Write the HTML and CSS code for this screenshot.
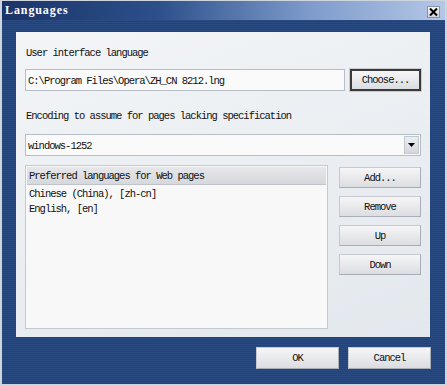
FILE: index.html
```html
<!DOCTYPE html>
<html lang="en">
<head>
  <meta charset="UTF-8" />
  <title>Languages</title>
  <link rel="stylesheet" href="styles.css">
</head>
<body>

  <div class="window">
    <!-- Title bar -->
    <div class="titlebar">
      <span class="title">Languages</span>
      <div class="close">
        <svg width="9" height="8" viewBox="0 0 9 8"><path d="M1 0.5 L8 7.5 M8 0.5 L1 7.5" stroke="#000" stroke-width="2"/></svg>
      </div>
    </div>

    <div class="client">
      <div class="panel">
        <div class="label">User interface language</div>
        <div class="row">
          <div class="field path">C:\Program Files\Opera\ZH_CN 8212.lng</div>
          <button class="btn default">Choose...</button>
        </div>

        <div class="label second">Encoding to assume for pages lacking specification</div>
        <div class="field select">
          <span>windows-1252</span>
          <span class="arrow"><svg width="7" height="4" viewBox="0 0 7 4"><path d="M0 0 H7 L3.5 4 Z" fill="#000"/></svg></span>
        </div>

        <div class="lists">
          <div class="listbox">
            <div class="list-head">Preferred languages for Web pages</div>
            <div class="list-item">Chinese (China), [zh-cn]</div>
            <div class="list-item">English, [en]</div>
          </div>
          <div class="side-buttons">
            <button class="btn">Add...</button>
            <button class="btn">Remove</button>
            <button class="btn">Up</button>
            <button class="btn">Down</button>
          </div>
        </div>
      </div>

      <div class="footer">
        <button class="btn big">OK</button>
        <button class="btn big">Cancel</button>
      </div>
    </div>
  </div>

</body>
</html>
```

FILE: styles.css
```css
* { box-sizing: border-box; margin: 0; padding: 0; }

body {
  font-family: 'Liberation Mono', 'DejaVu Sans Mono', monospace;
  font-size: 10.5px;
  letter-spacing: -1px;
  color: #111;
  background: #fff;
}

.window {
  width: 447px;
  height: 386px;
  border: 2px solid #cfd5de;
  border-top-width: 1px;
  display: flex;
  flex-direction: column;
  background: #26467c;
}

.titlebar {
  height: 19px;
  display: flex;
  align-items: center;
  justify-content: space-between;
  padding: 0 5px 0 3px;
  background: linear-gradient(to right, #1b3468 0%, #2c4f8a 35%, #7f9ccc 70%, #b4c7e6 100%);
}

.title {
  font-family: 'Liberation Serif', serif;
  font-weight: bold;
  font-size: 12px;
  letter-spacing: 0.9px;
  color: #fff;
}

.close {
  width: 13px;
  height: 12px;
  margin-top: 2px;
  background: linear-gradient(#f4f4f4, #cfd3d8);
  border: 1px solid #8a94a4;
  display: flex;
  align-items: center;
  justify-content: center;
}

.client {
  flex: 1;
  padding: 12px 0 0 14px;
  background: repeating-linear-gradient(#2a4b82 0 1px, #23427a 1px 2px);
}

.panel {
  width: 414px;
  height: 305px;
  padding: 14px 9px 8px 9px;
  background: linear-gradient(160deg, #f3f5f7 0%, #e9edf1 60%, #e3e8ee 100%);
  display: flex;
  flex-direction: column;
}

.label {
  line-height: 14px;
  padding-left: 1px;
  margin-bottom: 9px;
}

.label.second {
  margin-top: 18px;
  margin-bottom: 11px;
}

.row {
  display: flex;
  gap: 5px;
}

.field {
  height: 22px;
  background: #fafafa;
  border: 1px solid #b6bdc7;
  display: flex;
  align-items: center;
  padding: 1px 0 0 2px;
}

.path { width: 320px; }

.select {
  justify-content: space-between;
  padding-right: 1px;
}

.arrow {
  width: 15px;
  height: 18px;
  margin-top: -1px;
  background: linear-gradient(#eceef1, #d4d8de);
  border: 1px solid #c2c8d0;
  display: flex;
  align-items: center;
  justify-content: center;
}

.btn {
  font-family: 'Liberation Mono', 'DejaVu Sans Mono', monospace;
  font-size: 10.5px;
  letter-spacing: -1px;
  color: #111;
  width: 71px;
  height: 22px;
  background: linear-gradient(#f6f6f7, #dcdde1);
  border: 1px solid #c6c9cf;
  border-bottom-color: #a9adb5;
  border-right-color: #a9adb5;
}

.btn.default {
  border: 2px solid #3a3a3a;
  outline: 1px solid #c8ccd2;
}

.lists {
  margin-top: 9px;
  flex: 1;
  display: flex;
  gap: 11px;
}

.listbox {
  width: 303px;
  height: 164px;
  background: #f8f8f8;
  border: 1px solid #c4cad2;
  padding: 1px;
}

.list-head {
  height: 18px;
  line-height: 19px;
  padding-left: 2px;
  background: linear-gradient(#e6e7ea, #d6d8dc);
  border-bottom: 1px solid #c0c4ca;
}

.list-item {
  line-height: 15px;
  padding-left: 2px;
}

.list-head + .list-item { margin-top: 2px; }

.side-buttons {
  padding-top: 2px;
  display: flex;
  flex-direction: column;
  gap: 8px;
}

.side-buttons .btn {
  width: 82px;
  height: 21px;
}

.footer {
  display: flex;
  justify-content: flex-end;
  gap: 9px;
  margin-top: 10px;
  padding-right: 14px;
}

.btn.big {
  width: 83px;
  height: 22px;
}
```
